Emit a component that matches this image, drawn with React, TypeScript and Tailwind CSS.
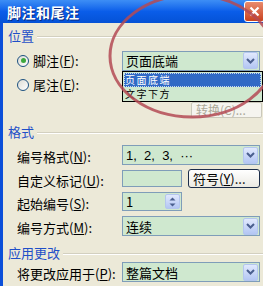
import React from "react";

function Chevron() {
  return (
    <div className="w-[15px] h-[17px] flex items-center justify-center rounded-[2px] border border-[#b4c6ee] bg-gradient-to-b from-[#e1e9fd] to-[#b3c6f3]">
      <svg width="9" height="6" viewBox="0 0 9 6">
        <path d="M1 1 L4.5 4.5 L8 1" fill="none" stroke="#4a5f8f" strokeWidth="2" />
      </svg>
    </div>
  );
}

function Combo({ children, w = "w-[138px]" }: { children: React.ReactNode; w?: string }) {
  return (
    <div className={`${w} h-[20px] flex items-center justify-between pl-[3px] pr-[1px] border border-[#7f9db9] bg-[#cfe8cf]`}>
      <span className="text-[13px] leading-none text-black whitespace-pre">{children}</span>
      <Chevron />
    </div>
  );
}

function Header({ text, mt }: { text: string; mt: string }) {
  return (
    <div className={`${mt} h-[14px] flex items-center gap-[3px] pl-[5px]`}>
      <span className="text-[13px] leading-none text-[#1f4fc8]">{text}</span>
      <div className="flex-1 mt-[3px] h-[2px] border-t border-[#d3d0c0] border-b border-b-white" />
    </div>
  );
}

function Label({ text, k }: { text: string; k: string }) {
  return (
    <span className="text-[13px] leading-none text-black whitespace-nowrap">
      {text}(<u>{k}</u>):
    </span>
  );
}

function Radio({ on }: { on?: boolean }) {
  return (
    <div className="w-[12px] h-[12px] rounded-full border border-[#1c5180] bg-gradient-to-br from-[#dcdcd5] to-white flex items-center justify-center">
      {on && <div className="w-[5px] h-[5px] rounded-full bg-[#3da83d]" />}
    </div>
  );
}

export default function App() {
  return (
    <div className="relative w-[263px] h-[286px] overflow-hidden bg-[#ece9d8] font-['Noto_Sans_CJK_SC',sans-serif]">
      {/* title bar */}
      <div className="h-[23px] flex items-center justify-between pl-[7px] bg-gradient-to-b from-[#3d8ef5] via-[#0a5de9] to-[#0552d6]">
        <span className="text-white text-[14px] font-bold leading-none tracking-[0.5px] [text-shadow:1px_1px_0_#0a2a80]">
          脚注和尾注
        </span>
        <div className="w-[21px] h-[21px] mr-[-2px] rounded-[3px] border border-white bg-gradient-to-b from-[#e98a6c] to-[#c8411c] flex items-center justify-center">
          <svg width="11" height="11" viewBox="0 0 11 11">
            <path d="M1.5 1.5 L9.5 9.5 M9.5 1.5 L1.5 9.5" stroke="white" strokeWidth="2.2" />
          </svg>
        </div>
      </div>

      {/* body */}
      <div className="h-[263px] border-l-[3px] border-[#0b4fd9] flex flex-col">
        <Header text="位置" mt="mt-[5px]" />

        <div className="mt-[9px] h-[19px] flex items-center pl-[14px]">
          <div className="w-[105px] flex items-center gap-[4px]">
            <Radio on />
            <Label text="脚注" k="F" />
          </div>
          <div className="relative">
            <Combo>页面底端</Combo>
            <div className="absolute top-full left-0 w-[141px] border border-black bg-[#cfe8cf] flex flex-col px-[1px] pt-[1px] z-10">
              <div className="h-[14px] bg-[#316ac5] border border-dotted border-[#c9d8f2] flex items-center">
                <span className="text-white text-[10px] leading-[10px] tracking-[1.5px]">页面底端</span>
              </div>
              <div className="h-[14px] flex items-center pl-[1px]">
                <span className="text-black text-[10px] leading-[10px] tracking-[1.5px]">文字下方</span>
              </div>
            </div>
          </div>
        </div>

        <div className="mt-[5px] h-[19px] flex items-center pl-[14px]">
          <div className="w-[105px] flex items-center gap-[4px]">
            <Radio />
            <Label text="尾注" k="E" />
          </div>
        </div>

        <div className="mt-[8px] h-[16px] flex justify-end pr-[1px]">
          <div className="w-[71px] h-[16px] rounded-[2px] border border-[#cac8bb] bg-[#f5f4ef] flex items-center pl-[4px]">
            <span className="text-[12px] leading-none text-[#aca899] whitespace-nowrap">转换(C)...</span>
          </div>
        </div>

        <Header text="格式" mt="mt-[6px]" />

        <div className="mt-[7px] h-[20px] flex items-center pl-[14px]">
          <div className="w-[105px]">
            <Label text="编号格式" k="N" />
          </div>
          <Combo>
            <span className="font-['Liberation_Sans',sans-serif]">1,  2,  3,  ···</span>
          </Combo>
        </div>

        <div className="mt-[4px] h-[19px] flex items-center pl-[14px]">
          <div className="w-[105px]">
            <Label text="自定义标记" k="U" />
          </div>
          <div className="w-[60px] h-[17px] border border-[#7f9db9] bg-[#cfe8cf]" />
          <div className="ml-[6px] w-[72px] h-[19px] rounded-[3px] border border-[#1c2d4a] bg-gradient-to-b from-white to-[#ebeae3] flex items-center pl-[4px]">
            <span className="text-[13px] leading-none text-black whitespace-nowrap">
              符号(<u>Y</u>)...
            </span>
          </div>
        </div>

        <div className="mt-[4px] h-[19px] flex items-center pl-[14px]">
          <div className="w-[105px]">
            <Label text="起始编号" k="S" />
          </div>
          <div className="w-[60px] h-[19px] border border-[#7f9db9] bg-[#cfe8cf] flex items-center justify-between pl-[3px] pr-[1px]">
            <span className="text-[13px] leading-none text-black">1</span>
            <div className="w-[15px] h-[15px] rounded-[2px] border border-[#b4c6ee] bg-gradient-to-b from-[#e1e9fd] to-[#b3c6f3] flex flex-col items-center justify-center gap-[2px]">
              <svg width="7" height="4" viewBox="0 0 7 4">
                <path d="M0.5 3.5 L3.5 0.5 L6.5 3.5 Z" fill="#4a5f8f" />
              </svg>
              <svg width="7" height="4" viewBox="0 0 7 4">
                <path d="M0.5 0.5 L3.5 3.5 L6.5 0.5 Z" fill="#4a5f8f" />
              </svg>
            </div>
          </div>
        </div>

        <div className="mt-[5px] h-[20px] flex items-center pl-[14px]">
          <div className="w-[105px]">
            <Label text="编号方式" k="M" />
          </div>
          <Combo>连续</Combo>
        </div>

        <Header text="应用更改" mt="mt-[9px]" />

        <div className="mt-[3px] h-[20px] flex items-center pl-[14px]">
          <div className="w-[105px]">
            <Label text="将更改应用于" k="P" />
          </div>
          <Combo>整篇文档</Combo>
        </div>
      </div>

      {/* red annotation ellipse */}
      <svg className="absolute inset-0 pointer-events-none z-20" width="263" height="286" viewBox="0 0 263 286">
        <ellipse cx="192" cy="56" rx="82" ry="61" fill="none" stroke="#b44a55" strokeOpacity="0.85" strokeWidth="3" />
      </svg>
    </div>
  );
}
